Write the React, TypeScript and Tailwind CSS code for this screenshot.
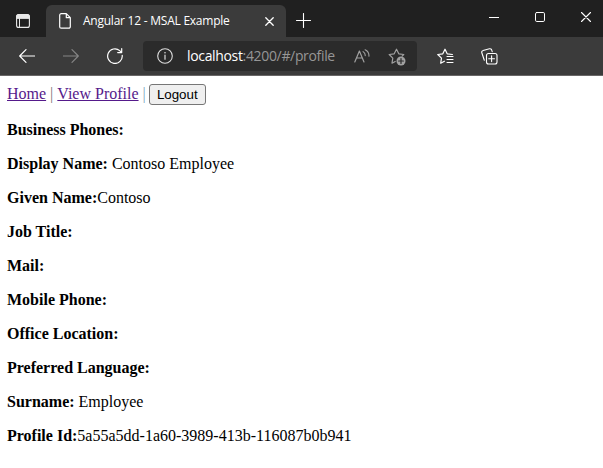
import type { ReactNode } from "react";

type IconProps = { w: number; h: number; className?: string; children: ReactNode };

function Icon({ w, h, className = "", children }: IconProps) {
  return (
    <svg
      width={w}
      height={h}
      viewBox={`0 0 ${w} ${h}`}
      fill="none"
      stroke="currentColor"
      strokeLinecap="round"
      strokeLinejoin="round"
      className={`block shrink-0 ${className}`}
    >
      {children}
    </svg>
  );
}

function TitleBar() {
  return (
    <header className="flex h-[37px] bg-[#202020] text-white">
      <Icon w={14} h={14} className="ml-4 mt-[14px] text-[#e8e8e8]">
        <rect x="0.6" y="0.6" width="12.8" height="12.8" rx="2" strokeWidth="1.1" />
        <path d="M.6 4V2.5A2 2 0 0 1 2.6.6h8.8a2 2 0 0 1 2 1.9V4Z" fill="currentColor" strokeWidth="1" />
        <path d="M3.5 4v9.4" strokeWidth="1" />
      </Icon>
      <div className="ml-4 mt-[5px] flex h-8 w-[240px] items-center rounded-t-md bg-[#3b3b3b]">
        <Icon w={12} h={16} className="ml-[13px]">
          <path d="M2.2.7h5.1l4 4v9a1.5 1.5 0 0 1-1.5 1.5H2.2A1.5 1.5 0 0 1 .7 13.7V2.2A1.5 1.5 0 0 1 2.2.7ZM7.3.7v4h4" strokeWidth="1.2" />
        </Icon>
        <span className="ml-3 w-[170px] whitespace-nowrap font-['Open_Sans',sans-serif] text-[12px] leading-4 tracking-[-0.24px]">
          Angular 12 - MSAL Example
        </span>
        <Icon w={9} h={9} className="ml-3">
          <path d="m.8.8 7.4 7.4m0-7.4L.8 8.2" strokeWidth="1.3" />
        </Icon>
      </div>
      <Icon w={15} h={15} className="ml-[10px] mt-[13px]">
        <path d="M7.5.5v14M.5 7.5h14" strokeWidth="1.1" />
      </Icon>
      <div className="ml-auto flex pr-3 pt-[12px]">
        <Icon w={10} h={10}>
          <path d="M0 5.5h10" strokeWidth="1" strokeLinecap="butt" />
        </Icon>
        <Icon w={10} h={10} className="ml-9">
          <rect x="0.5" y="0.5" width="9" height="9" rx="1.3" strokeWidth="1" />
        </Icon>
        <Icon w={10} h={10} className="ml-9">
          <path d="m.5.5 9 9m0-9-9 9" strokeWidth="1.1" />
        </Icon>
      </div>
    </header>
  );
}

function AddressBar() {
  return (
    <nav className="flex h-[39px] items-center border-b border-[#686666] bg-[#3b3b3b] text-white">
      <Icon w={16} h={14} className="ml-[19px]">
        <path d="M7 .7.7 7 7 13.3M.7 7h14.8" strokeWidth="1.2" />
      </Icon>
      <Icon w={16} h={14} className="ml-7 text-[#858585]">
        <path d="m9 .7 6.3 6.3L9 13.3M15.3 7H.5" strokeWidth="1.2" />
      </Icon>
      <Icon w={16} h={16} className="ml-7">
        <path d="M15.2 7.3A7.3 7.3 0 1 1 12.7 2.6L14.4 4.3M14.7.6v4h-4" strokeWidth="1.2" />
      </Icon>
      <div className="ml-5 flex h-[30px] w-[274px] items-center rounded-[4px] bg-[#2b2b2b]">
        <Icon w={16} h={16} className="ml-[14px] text-[#dedede]">
          <circle cx="8" cy="8" r="7.3" strokeWidth="1.1" />
          <path d="M8 7v4.2" strokeWidth="1.2" />
          <circle cx="8" cy="4.8" r=".8" fill="currentColor" stroke="none" />
        </Icon>
        <span className="ml-[14px] w-[166px] whitespace-nowrap font-['Open_Sans',sans-serif] text-[14px] leading-5 tracking-[-0.34px] text-[#969696]">
          <span className="text-white">localhost</span>:4200/#/profile
        </span>
        <Icon w={16} h={14} className="mb-[1px] ml-[1px] text-[#a0a0a0]">
          <path d="M.8 13 5.4 2 10 13M2.5 9h5.8" strokeWidth="1.2" />
          <path d="M9.1 2.6q2.4 1.5 2.1 4.2M11.1.7q4.2 2 3.8 6.4" strokeWidth="1.1" />
        </Icon>
        <Icon w={18} h={18} className="ml-[18px] mt-[1px] text-[#a0a0a0]">
          <path d="m4 15.2.8-5L1.2 6.5l5-.7L8.5 1.2l2.3 4.6 5 .7-1.7 1.7M4 15.2l3.2-1.7" strokeWidth="1.2" />
          <circle cx="13" cy="13" r="4.5" fill="currentColor" stroke="none" />
          <path d="M13 10.6v4.8M10.6 13h4.8" stroke="#2b2b2b" strokeWidth="1.2" />
        </Icon>
      </div>
      <Icon w={17} h={17} className="ml-5">
        <path d="m3.7 15.2.8-5L.8 6.5l5-.7L8 1.2l2.2 4.6 5.2.7M3.7 15.2l3.7-2" strokeWidth="1.2" />
        <path d="M10 8.5h6M10 11.5h6M10 14.5h6" strokeWidth="1.1" />
      </Icon>
      <Icon w={17} h={17} className="ml-[27px]">
        <path d="M3.3 12.2 .8 4.8a1.8 1.8 0 0 1 1.3-2.3L8.5.8a1.8 1.8 0 0 1 2.2 1.3l.5 1.6" strokeWidth="1.1" />
        <rect x="5.5" y="5.5" width="10.5" height="10.5" rx="2" strokeWidth="1.1" />
        <path d="M10.6 7.8v5.8M7.7 10.7h5.8" strokeWidth="1.1" />
      </Icon>
    </nav>
  );
}

const fields = [
  { label: "Business Phones:", value: "" },
  { label: "Display Name:", value: " Contoso Employee" },
  { label: "Given Name:", value: "Contoso" },
  { label: "Job Title:", value: "" },
  { label: "Mail:", value: "" },
  { label: "Mobile Phone:", value: "" },
  { label: "Office Location:", value: "" },
  { label: "Preferred Language:", value: "" },
  { label: "Surname:", value: " Employee" },
  { label: "Profile Id:", value: "5a55a5dd-1a60-3989-413b-116087b0b941" },
];

export default function App() {
  return (
    <div className="flex h-[468px] w-[603px] flex-col overflow-hidden bg-white">
      <TitleBar />
      <AddressBar />
      <main className="px-[7px] pt-2 font-['Liberation_Serif',serif] text-base leading-[18px] text-black">
        <div className="flex h-[21px] items-start pt-px whitespace-pre">
          <a className="text-[#551a8b] underline" href="#/">Home</a>
          <span className="text-[#777777]"> | </span>
          <a className="text-[#551a8b] underline" href="#/profile">View Profile</a>
          <span className="text-[#7aa5bd]"> | </span>
          <button className="-ml-px -mt-px h-[21px] w-[57px] rounded-[3px] border border-[#767676] bg-[#efefef] font-['Liberation_Sans',sans-serif] text-[13.333px] leading-[15px]">
            Logout
          </button>
        </div>
        <div className="mt-4 flex flex-col gap-4">
          {fields.map(({ label, value }) => (
            <p key={label} className="h-[18px] whitespace-pre">
              <strong className="font-bold">{label}</strong>
              {value}
            </p>
          ))}
        </div>
      </main>
    </div>
  );
}
